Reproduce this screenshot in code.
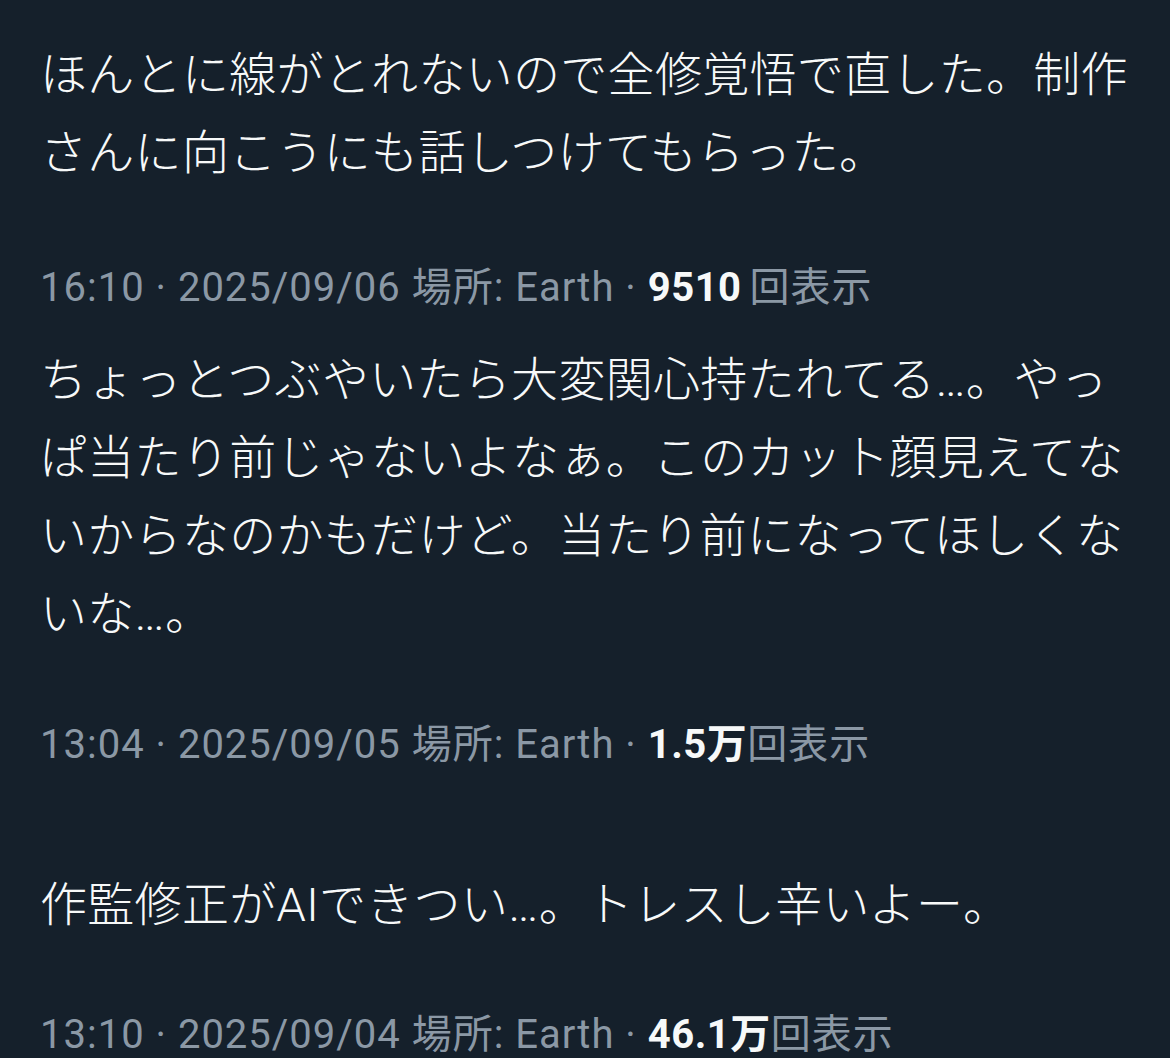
import React from 'react';

type Post = {
  lines: string[];
  time: string;
  date: string;
  views: string;
  unit?: string;
  gapAfterText: string;
  gapAfterMeta: string;
};

const posts: Post[] = [
  {
    lines: ['ほんとに線がとれないので全修覚悟で直した。制作', 'さんに向こうにも話しつけてもらった。'],
    time: '16:10',
    date: '2025/09/06',
    views: '9510',
    gapAfterText: 'mt-[72px]',
    gapAfterMeta: 'mb-[29px]',
  },
  {
    lines: [
      'ちょっとつぶやいたら大変関心持たれてる…。やっ',
      'ぱ当たり前じゃないよなぁ。このカット顔見えてな',
      'いからなのかもだけど。当たり前になってほしくな',
      'いな…。',
    ],
    time: '13:04',
    date: '2025/09/05',
    views: '1.5',
    unit: '万',
    gapAfterText: 'mt-[68px]',
    gapAfterMeta: 'mb-[97px]',
  },
  {
    lines: ['作監修正がAIできつい…。トレスし辛いよー。'],
    time: '13:10',
    date: '2025/09/04',
    views: '46.1',
    unit: '万',
    gapAfterText: 'mt-[67px]',
    gapAfterMeta: 'mb-0',
  },
];

const font = { fontFamily: 'Roboto, "Noto Sans CJK JP", sans-serif' };

const App = () => {
  return (
    <div className="min-h-screen w-full bg-[#15202b] overflow-hidden" style={font}>
      <div className="pl-[40px] pt-[36px]">
        {posts.map((post, i) => (
          <div key={i} className={post.gapAfterMeta}>
            <div className="text-[47px] leading-[78px] font-light text-[#f7f9f9] tracking-[0.3px]">
              {post.lines.map((line, j) => (
                <div key={j} className="whitespace-nowrap">{line}</div>
              ))}
            </div>
            <div className={`${post.gapAfterText} text-[40px] leading-[48px] tracking-[1px] text-[#8b98a5] whitespace-nowrap`}>
              <span>{post.time}</span>
              <span> · </span>
              <span>{post.date}</span>
              <span> 場所: Earth · </span>
              <span className="font-bold text-[#f7f9f9] tracking-[0.5px]">
                {post.views}
                {post.unit}
              </span>
              <span className={post.unit ? '' : 'ml-[8px]'}>回表示</span>
            </div>
          </div>
        ))}
      </div>
    </div>
  );
};

export default App;
